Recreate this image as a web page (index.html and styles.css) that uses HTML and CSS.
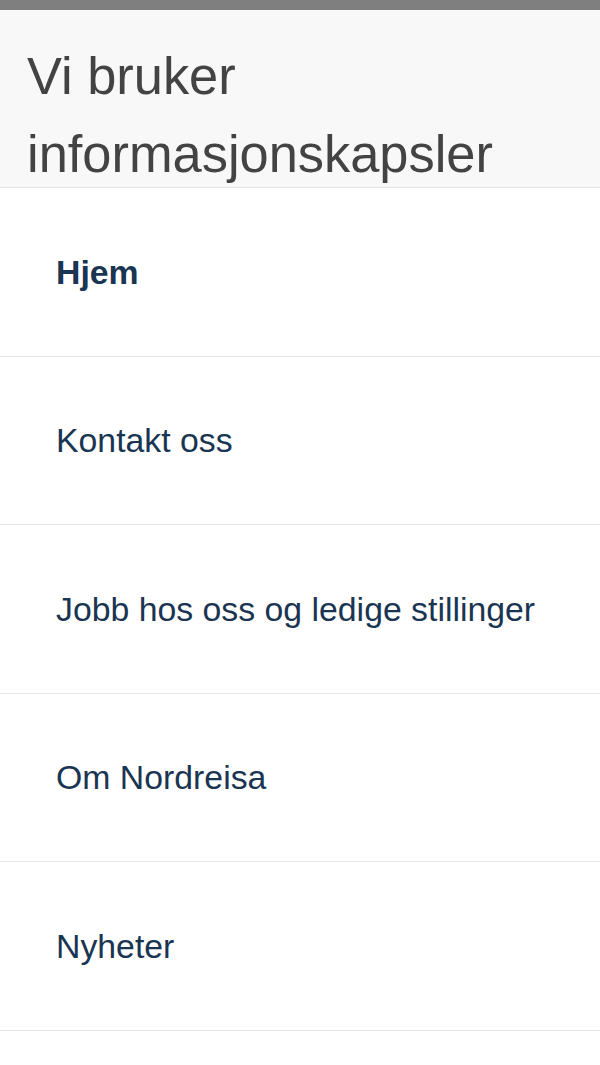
FILE: index.html
```html
<!DOCTYPE html>
<html lang="no">
<head>
<meta charset="utf-8">
<title>Vi bruker informasjonskapsler</title>
<link rel="stylesheet" href="styles.css">
</head>
<body>
<div class="backdrop-strip"></div>
<div class="dialog">
  <header class="dialog-header">
    <h1 class="dialog-title">Vi bruker informasjonskapsler</h1>
  </header>
  <nav class="menu">
    <ul class="menu-list">
      <li class="menu-item"><a class="menu-link menu-link--active" href="#">Hjem</a></li>
      <li class="menu-item"><a class="menu-link" href="#">Kontakt oss</a></li>
      <li class="menu-item"><a class="menu-link" href="#">Jobb hos oss og ledige stillinger</a></li>
      <li class="menu-item"><a class="menu-link" href="#">Om Nordreisa</a></li>
      <li class="menu-item"><a class="menu-link" href="#">Nyheter</a></li>
    </ul>
  </nav>
</div>
</body>
</html>
```

FILE: styles.css
```css
html, body {
  margin: 0;
  padding: 0;
  background: #ffffff;
  font-family: "Liberation Sans", Arial, sans-serif;
}

.backdrop-strip {
  height: 10px;
  background: #7f7f7f;
}

.dialog {
  background: #ffffff;
}

.dialog-header {
  box-sizing: border-box;
  height: 178px;
  padding: 26.5px 27px 0;
  background: #f8f8f8;
  border-bottom: 1px solid #e4e4e4;
  overflow: hidden;
}

.dialog-title {
  margin: 0;
  font-size: 52.4px;
  line-height: 78px;
  font-weight: normal;
  color: #434343;
}

.menu-list {
  list-style: none;
  margin: 0;
  padding: 0;
}

.menu-item {
  border-bottom: 1px solid #e6e6e6;
}

.menu-link {
  display: block;
  padding: 63.75px 20px 63.75px 56px;
  font-size: 33.8px;
  line-height: 40px;
  color: #1a3552;
  text-decoration: none;
}

.menu-link--active {
  font-weight: bold;
}
```
